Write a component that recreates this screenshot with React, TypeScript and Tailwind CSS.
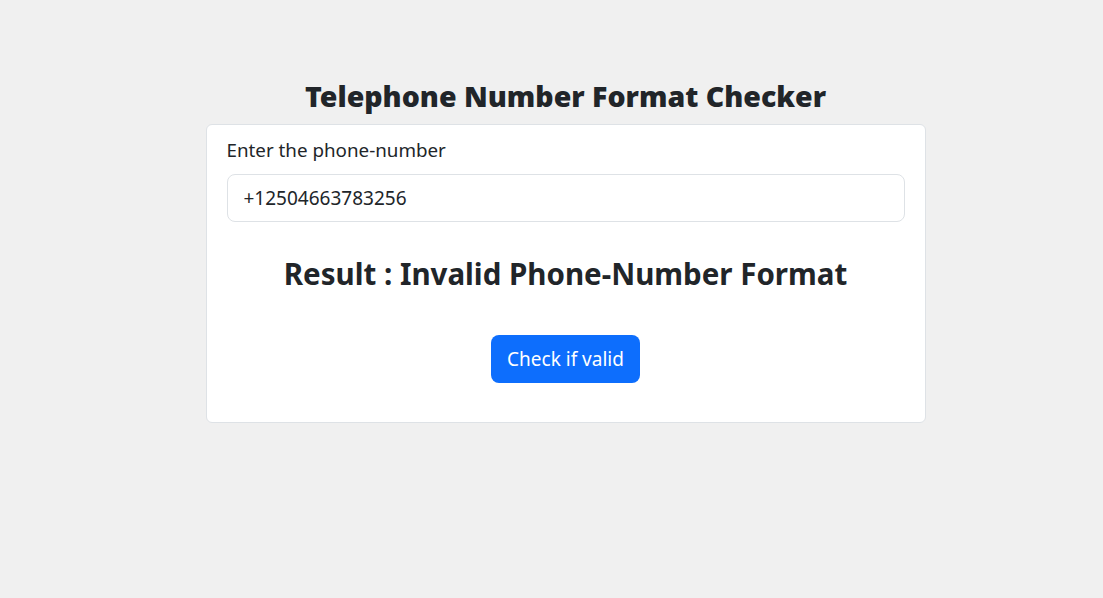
import React from "react";

export default function App() {
  return (
    <div
      className="min-h-screen bg-[#f0f0f0] text-[#212529]"
      style={{ fontFamily: '"Noto Sans", "Open Sans", sans-serif' }}
    >
      <div className="flex justify-center pl-7 pt-[78px]">
        <div className="flex w-[720px] flex-col items-center">
          <h2 className="mb-[9px] text-[28.5px] font-black leading-[37px]">
            Telephone Number Format Checker
          </h2>

          <div className="w-full rounded-md border border-[#dee2e6] bg-white px-5 pt-[10px] pb-[39px]">
            <label className="mb-[9px] block text-[18.8px] leading-[30px]">
              Enter the phone-number
            </label>
            <input
              type="text"
              defaultValue="+12504663783256"
              className="block h-12 w-full rounded-lg border border-[#dee2e6] px-4 text-[19px] text-[#212529] outline-none"
            />

            <h2 className="mt-[33px] text-center text-[29.5px] font-bold leading-[37px]">
              Result : Invalid Phone-Number Format
            </h2>

            <div className="mt-[43px] flex justify-center">
              <button className="h-12 rounded-lg bg-[#0d6efd] px-4 text-[19px] text-white">
                Check if valid
              </button>
            </div>
          </div>
        </div>
      </div>
    </div>
  );
}
